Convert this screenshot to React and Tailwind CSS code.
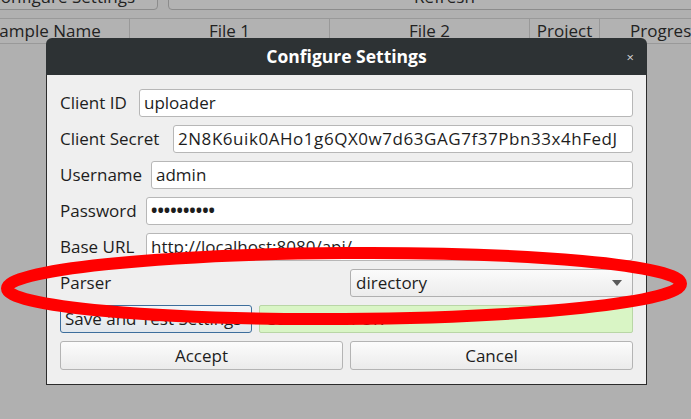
import React from 'react';

const font = { fontFamily: '"Open Sans", "DejaVu Sans", sans-serif' };

const Field = ({ label, labelW, value, valueClass = '' }) => (
  <div className="flex h-[28px] items-center">
    <div className={`${labelW} shrink-0 text-[17px] text-[#1d1d1d]`}>{label}</div>
    <div className="flex h-full flex-1 items-center rounded-[3px] border border-[#b7b7b7] bg-white px-[4px] text-[17px] text-[#1d1d1d]">
      <span className={valueClass}>{value}</span>
    </div>
  </div>
);

const HeaderCell = ({ w, children, className = '' }) => (
  <div className={`${w} ${className} flex h-full shrink-0 items-center justify-center border-r border-[#999] text-[17px] text-[#222]`}>
    {children}
  </div>
);

export default function App() {
  return (
    <div className="relative h-[419px] w-[691px] overflow-hidden bg-[#b0b0b0]" style={font}>
      {/* background window: toolbar */}
      <div className="-mt-[20px] flex h-[30px] gap-[10px]">
        <div className="-ml-[20px] flex w-[178px] items-end justify-end rounded-[4px] border border-[#8c8c8c] bg-[#b3b3b3] pr-[22px] pb-[1px] text-[17px] leading-[22px] text-[#222]">
          Configure Settings
        </div>
        <div className="flex flex-1 -mr-[20px] items-end justify-center rounded-[4px] border border-[#8c8c8c] bg-[#b3b3b3] pb-[1px] text-[17px] leading-[22px] text-[#222]">
          <span className="ml-[10px]">Refresh</span>
        </div>
      </div>
      {/* table header */}
      <div className="mt-[8px] flex h-[26px] border-y border-[#999] bg-[#b2b2b2]">
        <HeaderCell w="w-[130px]" className="justify-start">
          <span className="-ml-[10px]">Sample Name</span>
        </HeaderCell>
        <HeaderCell w="w-[200px]">File 1</HeaderCell>
        <HeaderCell w="w-[200px]">File 2</HeaderCell>
        <HeaderCell w="w-[70px]">Project</HeaderCell>
        <HeaderCell w="w-[140px]" className="justify-start pl-[30px]">Progress</HeaderCell>
      </div>

      {/* dialog */}
      <div className="absolute left-[46px] top-[38px] flex h-[347px] w-[601px] flex-col">
        <div className="relative flex h-[37px] shrink-0 items-center justify-center rounded-t-[6px] bg-[#2d3234] text-[17.5px] font-bold text-white">
          Configure Settings
          <span className="absolute right-[13px] top-[10px] text-[13px] font-normal text-[#d6d6d6]">×</span>
        </div>
        <div className="flex flex-1 flex-col gap-[8px] border-x border-b border-[#2b2b2b] bg-[#efefef] px-[13px] pt-[14px]">
          <Field label="Client ID" labelW="w-[79px]" value="uploader" />
          <Field label="Client Secret" labelW="w-[113px]" value="2N8K6uik0AHo1g6QX0w7d63GAG7f37Pbn33x4hFedJ" valueClass="tracking-[0.55px]" />
          <Field label="Username" labelW="w-[91px]" value="admin" />
          <Field label="Password" labelW="w-[86px]" value="••••••••••" valueClass="font-bold" />
          <Field label="Base URL" labelW="w-[86px]" value="http://localhost:8080/api/" />
          <div className="grid h-[28px] grid-cols-2 gap-[7px]">
            <div className="flex items-center text-[17px] text-[#1d1d1d]">Parser</div>
            <div className="flex items-center justify-between rounded-[3px] border border-[#b0b0b0] bg-gradient-to-b from-[#fbfbfb] to-[#ececec] pl-[5px] pr-[10px] text-[17px] text-[#1d1d1d]">
              directory
              <svg width="10" height="6" viewBox="0 0 10 6">
                <path d="M0 0 L10 0 L5 6 Z" fill="#5a5a5a" />
              </svg>
            </div>
          </div>
          <div className="flex h-[28px] gap-[7px]">
            <div className="flex w-[192px] shrink-0 items-center overflow-hidden whitespace-nowrap rounded-[3px] border border-[#3d6e9c] bg-gradient-to-b from-[#f3f5f7] to-[#e1e7ec] pl-[4px] text-[17px] text-[#1d1d1d]">
              Save and Test Settings
            </div>
            <div className="flex flex-1 items-center rounded-[2px] border border-[#b9d6a6] bg-[#d9f5c5] pl-[5px] text-[17px] text-[#1d1d1d]">
              Connection OK
            </div>
          </div>
          <div className="grid h-[29px] grid-cols-2 gap-[7px]">
            <div className="flex items-center justify-center rounded-[3px] border border-[#b4b4b4] bg-gradient-to-b from-[#fcfcfc] to-[#ebebeb] text-[17px] text-[#1d1d1d]">
              Accept
            </div>
            <div className="flex items-center justify-center rounded-[3px] border border-[#b4b4b4] bg-gradient-to-b from-[#fcfcfc] to-[#ebebeb] text-[17px] text-[#1d1d1d]">
              Cancel
            </div>
          </div>
        </div>
      </div>

      {/* red annotation */}
      <svg className="pointer-events-none absolute left-0 top-0" width="691" height="419" viewBox="0 0 691 419">
        <ellipse cx="344" cy="286" rx="337" ry="33" fill="none" stroke="#ff0000" strokeWidth="12" transform="rotate(-0.4 344 286)" />
      </svg>
    </div>
  );
}
